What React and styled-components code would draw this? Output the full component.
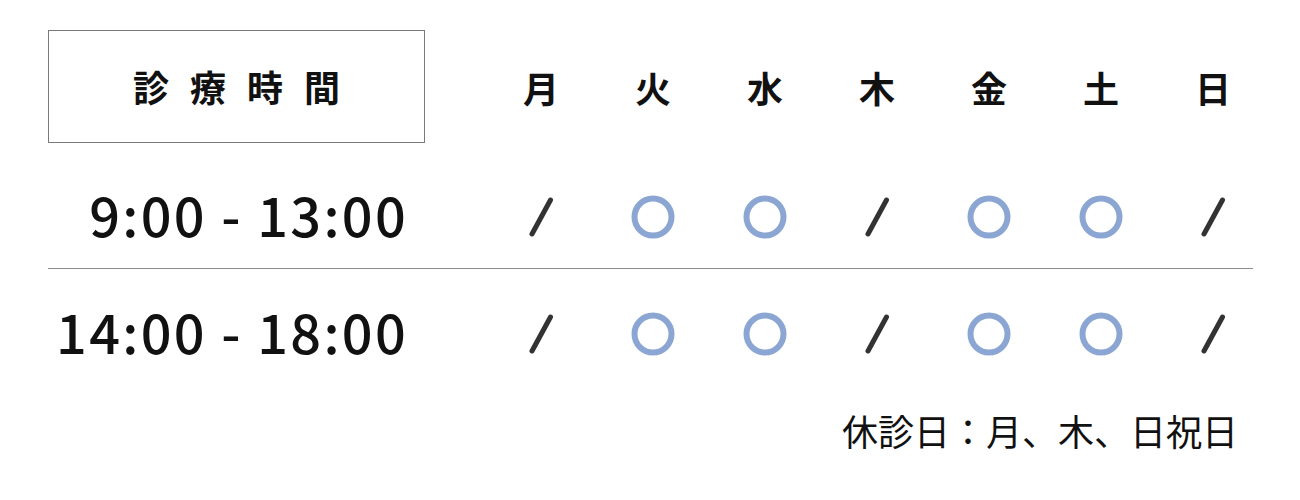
import styled, { createGlobalStyle } from "styled-components";

const GlobalStyle = createGlobalStyle`
  body {
    margin: 0;
    background: #ffffff;
    font-family: "Noto Sans CJK JP", "Noto Sans", sans-serif;
    color: #111111;
  }
`;

const Wrap = styled.div`
  width: 1300px;
  height: 500px;
  padding: 30px 0 0 48px;
  box-sizing: border-box;
`;

const Row = styled.div`
  display: flex;
  align-items: center;
  width: 1205px;
  height: ${(p) => p.h}px;
  padding-top: ${(p) => p.pt || 0}px;
  box-sizing: border-box;
  border-bottom: ${(p) => (p.line ? "1px solid #8c8c8c" : "none")};
`;

const TitleBox = styled.div`
  flex-shrink: 0;
  width: 377px;
  height: 113px;
  box-sizing: border-box;
  border: 1px solid #7a7a7a;
  display: flex;
  align-items: center;
  justify-content: center;
  font-size: 36px;
  font-weight: 700;
  letter-spacing: 21px;
  padding-left: 21px;
  padding-bottom: 2px;
`;

const TimeCell = styled.div`
  flex-shrink: 0;
  width: 377px;
  box-sizing: border-box;
  padding-right: 17px;
  text-align: right;
  font-size: 54px;
  font-weight: 500;
  letter-spacing: 2.3px;
  line-height: 1;
  padding-bottom: 6px;
`;

const Days = styled.div`
  flex-shrink: 0;
  display: grid;
  grid-template-columns: repeat(7, 112px);
  margin-left: 60px;
`;

const Day = styled.div`
  display: flex;
  justify-content: center;
  align-items: center;
  font-size: 36px;
  font-weight: 700;
  line-height: 1;
`;

const Footer = styled.div`
  width: 1190px;
  text-align: right;
  font-size: 36px;
  font-weight: 400;
  margin-top: 17px;
  line-height: 1;
`;

const days = ["月", "火", "水", "木", "金", "土", "日"];
const open = [false, true, true, false, true, true, false];

function Mark({ on }) {
  if (on) {
    return (
      <svg width="46" height="46" viewBox="0 0 46 46">
        <circle cx="23" cy="23" r="18.5" fill="none" stroke="#8ba6d3" strokeWidth="6" />
      </svg>
    );
  }
  return (
    <svg width="46" height="46" viewBox="0 0 46 46">
      <line x1="32.5" y1="6" x2="14" y2="40" stroke="#333333" strokeWidth="5" strokeLinecap="round" />
    </svg>
  );
}

export default function App() {
  return (
    <Wrap>
      <GlobalStyle />
      <Row h={113}>
        <TitleBox>診療時間</TitleBox>
        <Days>
          {days.map((d) => (
            <Day key={d}>{d}</Day>
          ))}
        </Days>
      </Row>
      <Row h={126} pt={22} line>
        <TimeCell>9:00 - 13:00</TimeCell>
        <Days>
          {open.map((o, i) => (
            <Day key={i}>
              <Mark on={o} />
            </Day>
          ))}
        </Days>
      </Row>
      <Row h={126} pt={4}>
        <TimeCell>14:00 - 18:00</TimeCell>
        <Days>
          {open.map((o, i) => (
            <Day key={i}>
              <Mark on={o} />
            </Day>
          ))}
        </Days>
      </Row>
      <Footer>休診日：月、木、日祝日</Footer>
    </Wrap>
  );
}
